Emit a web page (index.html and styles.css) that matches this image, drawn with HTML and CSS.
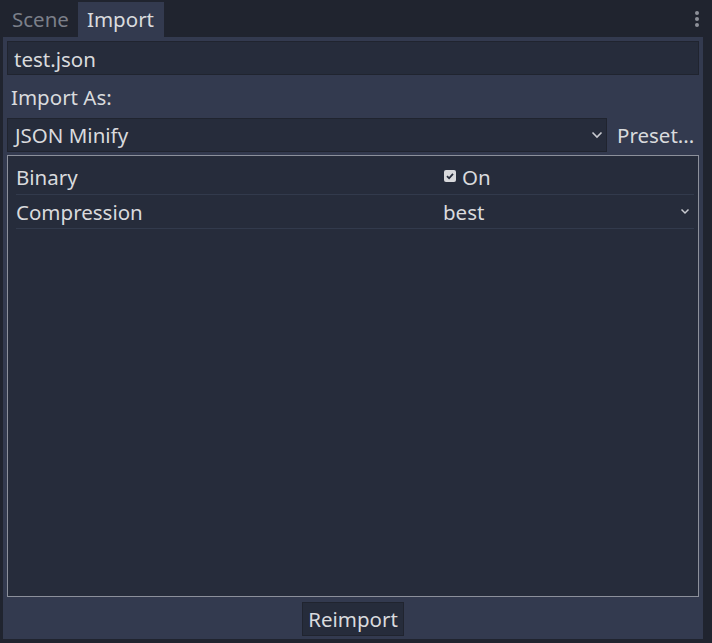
FILE: index.html
```html
<!DOCTYPE html>
<html>
<head>
<meta charset="utf-8">
<link rel="stylesheet" href="styles.css">
</head>
<body>
<div class="dock">
  <div class="tabbar">
    <div class="tab">Scene</div>
    <div class="tab active">Import</div>
    <div class="spacer"></div>
    <div class="menu"><span></span><span></span><span></span></div>
  </div>
  <div class="panel">
    <div class="field">test.json</div>
    <div class="label">Import As:</div>
    <div class="importrow">
      <div class="select">
        <span>JSON Minify</span>
        <svg class="chev" width="12" height="8" viewBox="0 0 12 8"><path d="M1.5 1.5 L6 6 L10.5 1.5" fill="none" stroke="#c8cad0" stroke-width="1.6"/></svg>
      </div>
      <div class="preset">Preset...</div>
    </div>
    <div class="inspector">
      <div class="prop">
        <div class="name">Binary</div>
        <div class="value">
          <svg class="check" width="12" height="12" viewBox="0 0 12 12"><rect x="0" y="0" width="12" height="12" rx="2" fill="#d8d9dc"/><path d="M3 6.2 L5.1 8.3 L9 3.8" fill="none" stroke="#262c3b" stroke-width="1.8"/></svg>
          <span>On</span>
        </div>
      </div>
      <div class="prop">
        <div class="name">Compression</div>
        <div class="value">
          <span>best</span>
          <svg class="chev small" width="10" height="7" viewBox="0 0 10 7"><path d="M1.5 1.5 L5 5 L8.5 1.5" fill="none" stroke="#c8cad0" stroke-width="1.5"/></svg>
        </div>
      </div>
    </div>
    <div class="footer">
      <div class="button">Reimport</div>
    </div>
  </div>
</div>
</body>
</html>
```
FILE: styles.css
```css
html, body {
  margin: 0;
  padding: 0;
  background: #20242f;
  width: 712px;
  height: 643px;
  overflow: hidden;
}
body {
  font-family: "Noto Sans", "DejaVu Sans", sans-serif;
  font-size: 20.5px;
  color: #d9dadd;
}
.dock {
  display: flex;
  flex-direction: column;
  height: 643px;
}
.tabbar {
  display: flex;
  align-items: flex-end;
  height: 37px;
}
.tab {
  height: 35px;
  line-height: 35px;
  width: 78px;
  padding-left: 12px;
  color: #7b7f89;
  box-sizing: border-box;
}
.tab.active {
  background: #333a4f;
  color: #d9dadd;
  width: 86px;
  padding-left: 9px;
}
.spacer { flex: 1; }
.menu {
  align-self: flex-start;
  display: flex;
  flex-direction: column;
  gap: 2px;
  padding: 11px 13px 0 0;
}
.menu span {
  width: 4px;
  height: 4px;
  border-radius: 50%;
  background: #8d9099;
}
.panel {
  margin: 0 9px 4px 3px;
  background: #333a4f;
  height: 602px;
  padding: 4px 4px 0 4px;
  box-sizing: border-box;
  display: flex;
  flex-direction: column;
}
.field {
  height: 34px;
  line-height: 35px;
  background: #262c3b;
  border: 1px solid #20242f;
  box-sizing: border-box;
  padding-left: 6px;
}
.label {
  height: 43px;
  line-height: 45px;
  padding-left: 4px;
}
.importrow {
  display: flex;
  height: 34px;
}
.select {
  width: 600px;
  background: #262c3b;
  border: 1px solid #20242f;
  box-sizing: border-box;
  display: flex;
  align-items: center;
  justify-content: space-between;
  padding: 0 3px 0 7px;
}
.select span { line-height: 33px; }
.preset {
  flex: 1;
  line-height: 35px;
  padding-left: 10px;
}
.inspector {
  margin-top: 3px;
  height: 442px;
  background: #262c3b;
  border: 1px solid #8c909b;
  box-sizing: border-box;
  padding: 4px 4px 0 8px;
}
.prop {
  display: flex;
  height: 34px;
  border-bottom: 1px solid #323a4c;
  align-items: center;
}
.prop:nth-child(2) { height: 33px; }
.name {
  width: 427px;
}
.value {
  flex: 1;
  display: flex;
  align-items: center;
  justify-content: space-between;
}
.prop:first-child .value { justify-content: flex-start; gap: 6px; padding-left: 1px; }
.check { margin-top: -2px; }
.chev.small { margin-right: 4px; }
.footer {
  flex: 1;
  display: flex;
  justify-content: center;
  align-items: center;
  padding-top: 1px;
}
.button {
  width: 102px;
  height: 34px;
  line-height: 32px;
  text-align: center;
  background: #262c3b;
  border: 1px solid #20242f;
  box-sizing: border-box;
}
```
